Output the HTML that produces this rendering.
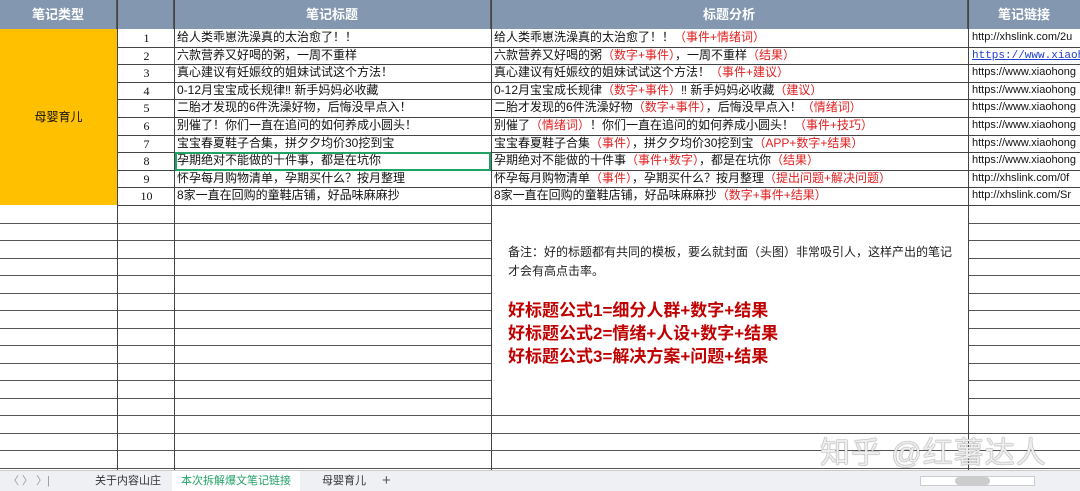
<!DOCTYPE html>
<html><head><meta charset="utf-8"><style>
*{margin:0;padding:0;box-sizing:border-box}
body{width:1080px;height:491px;overflow:hidden;background:#fff;position:relative;font-family:"Liberation Sans","Noto Sans CJK SC",sans-serif;font-size:12px;color:#111}
.a{position:absolute}
.hd{background:#8497b0;color:#fff;font-size:13px;font-weight:bold;text-align:center;line-height:29px;top:0;height:29px;border-right:1px solid #555}
.r{color:#e02020}
.cell{position:absolute;height:17.6px;line-height:17.6px;white-space:nowrap;overflow:hidden;padding-left:2px}
.hl{position:absolute;height:1px;background:#444;left:117px;width:963px}
.hl2{position:absolute;height:1px;background:#555;left:0;width:1080px}
.vl{position:absolute;width:1px;background:#444;top:0;height:470px}
</style></head><body>
<div class="a hd" style="left:0;width:117px">笔记类型</div>
<div class="a hd" style="left:117px;width:57px"></div>
<div class="a hd" style="left:174px;width:317px">笔记标题</div>
<div class="a hd" style="left:491px;width:477px">标题分析</div>
<div class="a hd" style="left:968px;width:112px;border-right:0">笔记链接</div>
<div class="a" style="left:0;top:29px;width:117px;height:176px;background:#ffc000;text-align:center;line-height:176px;font-size:12px">母婴育儿</div>

<div id="rows"></div>
<div class="vl" style="left:117px"></div>
<div class="vl" style="left:174px"></div>
<div class="vl" style="left:491px"></div>
<div class="vl" style="left:968px"></div>

<div class="a" style="left:492px;top:223px;width:476px;height:189px;background:#fff"></div>
<div class="a" style="left:508px;top:243px;width:450px;font-size:12px;line-height:19px;color:#222">备注：好的标题都有共同的模板，要么就封面（头图）非常吸引人，这样产出的笔记才会有高点击率。</div>
<div class="a" style="left:508px;top:299px;font-size:17px;font-weight:bold;color:#c00000;line-height:23px">好标题公式1=细分人群+数字+结果<br>好标题公式2=情绪+人设+数字+结果<br>好标题公式3=解决方案+问题+结果</div>
<div class="a" style="left:175px;top:152px;width:316px;height:19px;border:2px solid #21a366"></div>

<div class="a" style="left:820px;top:428px;font-size:30px;color:#eee;text-shadow:0 0 1px #777,0 0 1px #777;letter-spacing:1px">知乎 @红薯达人</div>

<div class="a" style="left:0;top:470px;width:1080px;height:21px;background:#eef0f3;border-top:1px solid #ccc;font-size:11px;line-height:20px;color:#333">
<span class="a" style="left:8px;color:#999">〈 〉 〉|</span>
<span class="a" style="left:95px">关于内容山庄</span>
<span class="a" style="left:172px;width:128px;background:#fff;text-align:center;color:#21a366;height:20px">本次拆解爆文笔记链接</span>
<span class="a" style="left:322px">母婴育儿</span>
<span class="a" style="left:382px;font-size:15px;color:#555">+</span>
<span class="a" style="left:920px;top:5px;width:115px;height:10px;border:1px solid #ccc;background:#fff"></span>
<span class="a" style="left:955px;top:6px;width:35px;height:8px;border-radius:4px;background:#ccc"></span>
</div>

<script>
var t=["给人类乖崽洗澡真的太治愈了！！","六款营养又好喝的粥，一周不重样","真心建议有妊娠纹的姐妹试试这个方法！","0-12月宝宝成长规律‼ 新手妈妈必收藏","二胎才发现的6件洗澡好物，后悔没早点入！","别催了！你们一直在追问的如何养成小圆头！","宝宝春夏鞋子合集，拼夕夕均价30挖到宝","孕期绝对不能做的十件事，都是在坑你","怀孕每月购物清单，孕期买什么？按月整理","8家一直在回购的童鞋店铺，好品味麻麻抄"];
var an=['给人类乖崽洗澡真的太治愈了！！<span class=r>（事件+情绪词）</span>','六款营养又好喝的粥<span class=r>（数字+事件）</span>，一周不重样<span class=r>（结果）</span>','真心建议有妊娠纹的姐妹试试这个方法！<span class=r>（事件+建议）</span>','0-12月宝宝成长规律<span class=r>（数字+事件）</span>‼ 新手妈妈必收藏<span class=r>（建议）</span>','二胎才发现的6件洗澡好物<span class=r>（数字+事件）</span>，后悔没早点入！<span class=r>（情绪词）</span>','别催了<span class=r>（情绪词）</span>！你们一直在追问的如何养成小圆头！<span class=r>（事件+技巧）</span>','宝宝春夏鞋子合集<span class=r>（事件）</span>，拼夕夕均价30挖到宝<span class=r>（APP+数字+结果）</span>','孕期绝对不能做的十件事<span class=r>（事件+数字）</span>，都是在坑你<span class=r>（结果）</span>','怀孕每月购物清单<span class=r>（事件）</span>，孕期买什么？按月整理<span class=r>（提出问题+解决问题）</span>','8家一直在回购的童鞋店铺，好品味麻麻抄<span class=r>（数字+事件+结果）</span>'];
var l=["http://xhslink.com/2u","<u style='color:#1f3fd0;font-family:Liberation Mono'>https://www.xiaoho</u>","https://www.xiaohong","https://www.xiaohong","https://www.xiaohong","https://www.xiaohong","https://www.xiaohong","https://www.xiaohong","http://xhslink.com/0f","http://xhslink.com/Sr"];
var h="";
for(var i=0;i<10;i++){var y=29+i*17.6;
h+='<div class=hl style="top:'+(y+17.6)+'px"></div>';
h+='<div class=cell style="left:117px;width:57px;text-align:center;top:'+(y+1)+'px;font-family:Liberation Serif">'+(i+1)+'</div>';
h+='<div class=cell style="left:175px;width:315px;top:'+y+'px">'+t[i]+'</div>';
h+='<div class=cell style="left:492px;width:476px;top:'+y+'px">'+an[i]+'</div>';
h+='<div class=cell style="left:970px;width:110px;top:'+y+'px;font-size:11px">'+l[i]+'</div>';}
for(var j=1;j<16;j++){var y=205+j*17.5;h+='<div class=hl2 style="top:'+y+'px"></div>';}
document.getElementById('rows').innerHTML=h;
</script>
</body></html>
